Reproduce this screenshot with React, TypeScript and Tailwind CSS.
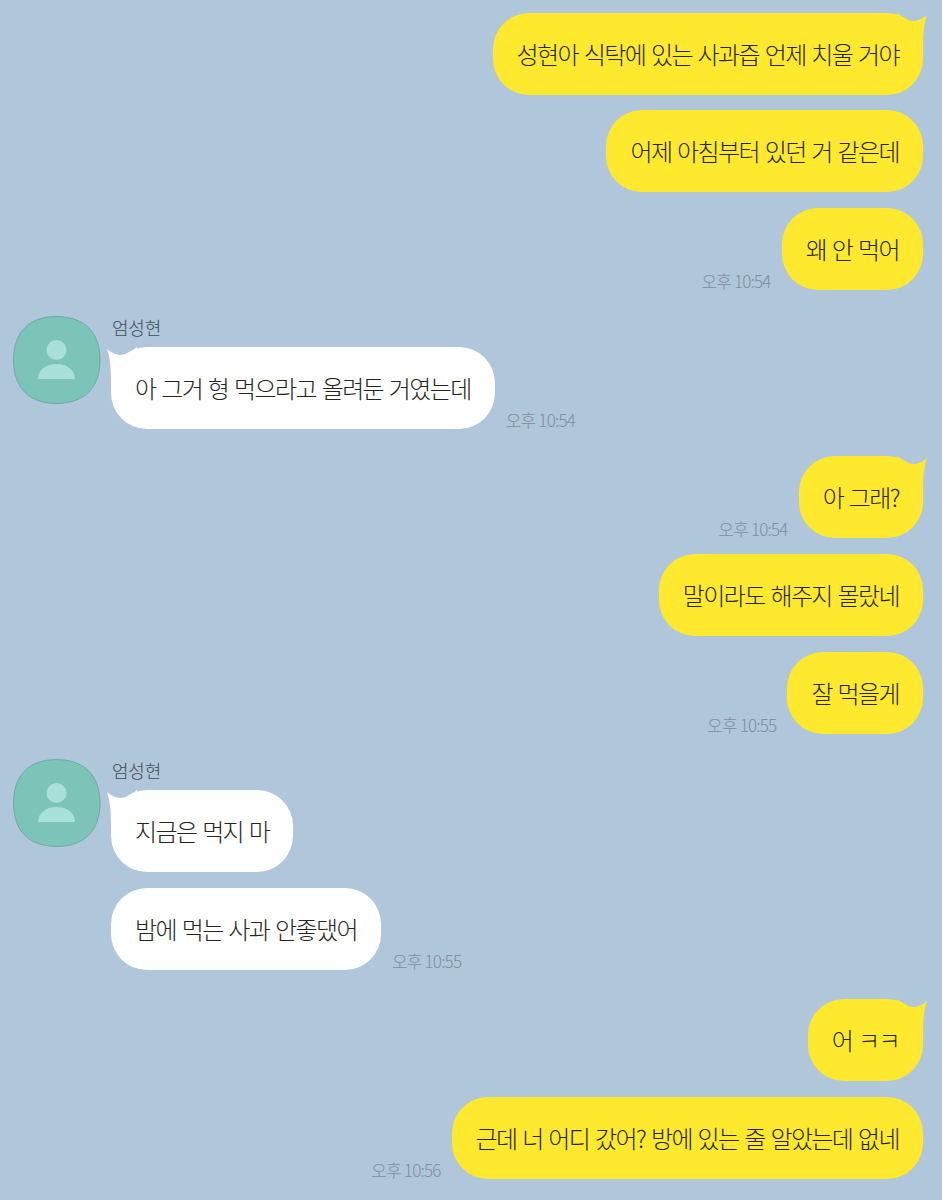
const font = "font-['Noto_Sans_CJK_KR','Noto_Sans',sans-serif]";

function Time({ value }: { value: string }) {
  return (
    <span className="mb-[-3px] whitespace-nowrap text-[17px] leading-[24px] font-light tracking-[-0.8px] text-[#7f8da0]">
      {value}
    </span>
  );
}

function Bubble({ text, mine, tail }: { text: string; mine?: boolean; tail?: boolean }) {
  return (
    <div
      className={`relative flex h-[82px] items-center whitespace-nowrap rounded-[36px] px-6 text-[24px] font-light tracking-[-1.6px] [word-spacing:2px] text-[#26251c] ${
        mine ? 'bg-[#ffe92f]' : 'bg-white'
      }`}
    >
      {tail && mine && (
        <svg className="absolute right-[-4px] top-0" width="30" height="36" viewBox="0 0 30 36">
          <path d="M0 0 Q8 7 16 8 Q23 8 30 2 Q26 12 26 36 L0 36 Z" fill="#ffe92f" />
        </svg>
      )}
      {tail && !mine && (
        <svg className="absolute left-[-4px] top-0" width="30" height="36" viewBox="0 0 30 36">
          <path d="M30 0 Q22 7 14 8 Q7 8 0 2 Q4 12 4 36 L30 36 Z" fill="#ffffff" />
        </svg>
      )}
      <span className="relative block">{text}</span>
    </div>
  );
}

function MyRow({ text, time, tail, className }: { text: string; time?: string; tail?: boolean; className: string }) {
  return (
    <div className={`flex items-end justify-end gap-[11px] ${className}`}>
      {time && <Time value={time} />}
      <Bubble text={text} mine tail={tail} />
    </div>
  );
}

function Avatar() {
  return (
    <svg width="88" height="88" viewBox="0 0 88 88" className="shrink-0">
      <path
        d="M43.5.6C71 .6 87 16 87 44S71 87.4 43.5 87.4.6 72 .6 44 16 .6 43.5.6Z"
        fill="#7cc4b8"
        stroke="#6fa9a6"
        strokeWidth="1"
      />
      <circle cx="43.5" cy="34" r="10" fill="#a9e0d7" />
      <path d="M25 63C25 54 33 48 43.5 48S62 54 62 63Z" fill="#a9e0d7" />
    </svg>
  );
}

function TheirGroup({ rows, time, className }: { rows: string[]; time: string; className: string }) {
  return (
    <div className={`flex gap-[10px] pl-[13px] ${className}`}>
      <Avatar />
      <div className="flex flex-col items-start">
        <div className="h-[31px] pl-px text-[18px] leading-[22px] font-light tracking-[-0.2px] text-[#3f4a57]">엄성현</div>
        {rows.map((row, i) => {
          const last = i === rows.length - 1;
          return (
            <div key={row} className={`flex items-end gap-[11px] ${i > 0 ? 'mt-4' : ''}`}>
              <Bubble text={row} tail={i === 0} />
              {last && <Time value={time} />}
            </div>
          );
        })}
      </div>
    </div>
  );
}

export default function App() {
  return (
    <div className={`h-[1200px] w-[942px] overflow-hidden bg-[#b0c6da] pt-[13px] pr-[19px] ${font}`}>
      <MyRow text="성현아 식탁에 있는 사과즙 언제 치울 거야" tail className="" />
      <MyRow text="어제 아침부터 있던 거 같은데" className="mt-[15px]" />
      <MyRow text="왜 안 먹어" time="오후 10:54" className="mt-4" />
      <TheirGroup rows={['아 그거 형 먹으라고 올려둔 거였는데']} time="오후 10:54" className="mt-[26px]" />
      <MyRow text="아 그래?" time="오후 10:54" tail className="mt-[27px]" />
      <MyRow text="말이라도 해주지 몰랐네" className="mt-4" />
      <MyRow text="잘 먹을게" time="오후 10:55" className="mt-4" />
      <TheirGroup rows={['지금은 먹지 마', '밤에 먹는 사과 안좋댔어']} time="오후 10:55" className="mt-[25px]" />
      <MyRow text="어 ㅋㅋ" tail className="mt-[29px]" />
      <MyRow text="근데 너 어디 갔어? 방에 있는 줄 알았는데 없네" time="오후 10:56" className="mt-4" />
    </div>
  );
}
